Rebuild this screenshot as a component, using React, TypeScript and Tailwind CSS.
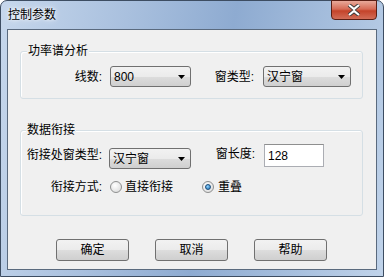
const font = "font-['Liberation_Sans','Noto_Sans_CJK_SC',sans-serif]";

function Combo({ value, w }: { value: string; w: string }) {
  return (
    <div
      className={`${w} h-[21px] flex items-center justify-between pl-[3px] pr-[5px] border border-[#707070] rounded-[3px] bg-[linear-gradient(#f2f2f2_0%,#ebebeb_50%,#dddddd_50%,#cfcfcf_100%)] text-[12px] leading-[14px] text-black`}
    >
      <span>{value}</span>
      <svg width="7" height="4" viewBox="0 0 7 4">
        <path d="M0 0H7L3.5 4Z" fill="#000" />
      </svg>
    </div>
  );
}

function Radio({ checked }: { checked?: boolean }) {
  return (
    <div className="w-[12px] h-[12px] rounded-full border border-[#8e8f8f] bg-[radial-gradient(circle_at_40%_35%,#ffffff,#d6d6d6)] flex items-center justify-center shrink-0">
      {checked && (
        <div className="w-[6px] h-[6px] rounded-full bg-[radial-gradient(circle_at_40%_35%,#8fd3ff,#1f6fb2)] border border-[#1a4d7c]" />
      )}
    </div>
  );
}

function Button({ label }: { label: string }) {
  return (
    <div className="w-[73px] h-[22px] flex items-center justify-center border border-[#707070] rounded-[3px] bg-[linear-gradient(#f2f2f2_0%,#ebebeb_50%,#dddddd_50%,#cfcfcf_100%)] text-[12px] leading-[14px] text-black">
      {label}
    </div>
  );
}

export default function App() {
  return (
    <div className={`${font} w-[384px] h-[277px] flex flex-col rounded-t-[7px] border border-[#3d4d62] bg-[linear-gradient(100deg,#c6d7ec_0%,#a9c0de_30%,#8eabd1_55%,#a8c0de_80%,#c0d3ea_100%)]`}>
      {/* Title bar */}
      <div className="h-[28px] flex items-start justify-between">
        <span className="pl-[7px] pt-[7px] text-[12px] leading-[14px] text-black [text-shadow:0_0_6px_#fff,0_0_3px_#fff]">
          控制参数
        </span>
        <div className="-mt-px mr-[6px] w-[46px] h-[20px] rounded-b-[4px] border border-[#5a1e14] bg-[linear-gradient(#e8a99a_0%,#d66b56_45%,#c4432a_55%,#d26d58_100%)] flex items-center justify-center">
          <svg width="14" height="12" viewBox="0 0 14 12">
            <path
              d="M2 1L7 5L12 1M2 11L7 7L12 11"
              stroke="#3a3a3a"
              strokeWidth="4"
              fill="none"
            />
            <path
              d="M2 1L7 5L12 1M2 11L7 7L12 11"
              stroke="#fff"
              strokeWidth="2.2"
              fill="none"
            />
          </svg>
        </div>
      </div>

      {/* Client area */}
      <div className="mx-[6px] h-[241px] border border-[#5a6a7e] bg-[#f0f0f0] flex flex-col text-[12px] leading-[14px] text-black">
        {/* 功率谱分析 */}
        <div className="relative ml-[12px] mt-[21px] w-[343px] h-[48px] border border-[#d5dfe5] rounded-[3px] shadow-[inset_1px_1px_0_#fff]">
          <span className="absolute -top-[8px] left-[6px] px-[1px] bg-[#f0f0f0]">功率谱分析</span>
          <div className="flex items-center mt-[14px]">
            <span className="w-[81px] text-right">线数:</span>
            <div className="ml-[8px]">
              <Combo value="800" w="w-[81px]" />
            </div>
            <span className="w-[63px] text-right">窗类型:</span>
            <div className="ml-[9px]">
              <Combo value="汉宁窗" w="w-[88px]" />
            </div>
          </div>
        </div>

        {/* 数据衔接 */}
        <div className="relative ml-[12px] mt-[31px] w-[343px] h-[86px] border border-[#d5dfe5] rounded-[3px] shadow-[inset_1px_1px_0_#fff]">
          <span className="absolute -top-[8px] left-[5px] px-[1px] bg-[#f0f0f0]">数据衔接</span>
          <div className="flex items-start">
            <span className="w-[81px] text-right mt-[17px]">衔接处窗类型:</span>
            <div className="ml-[7px] mt-[17px]">
              <Combo value="汉宁窗" w="w-[82px]" />
            </div>
            <span className="w-[64px] text-right mt-[16px]">窗长度:</span>
            <div className="ml-[9px] mt-[13px] w-[60px] h-[23px] bg-white border border-[#abadb3] border-t-[#8e8f8f] pl-[3px] flex items-center">
              128
            </div>
          </div>
          <div className="flex items-center mt-[11px] h-[14px]">
            <span className="w-[81px] text-right">衔接方式:</span>
            <div className="ml-[8px]">
              <Radio />
            </div>
            <span className="ml-[3px]">直接衔接</span>
            <div className="ml-[29px]">
              <Radio checked />
            </div>
            <span className="ml-[4px]">重叠</span>
          </div>
        </div>

        {/* Buttons */}
        <div className="flex gap-[26px] pl-[48px] mt-[23px]">
          <Button label="确定" />
          <Button label="取消" />
          <Button label="帮助" />
        </div>
      </div>
    </div>
  );
}
